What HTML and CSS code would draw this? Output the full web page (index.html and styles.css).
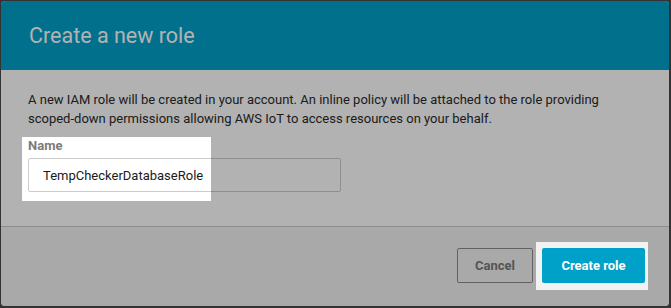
FILE: index.html
```html
<!DOCTYPE html>
<html lang="en">
<head>
  <meta charset="UTF-8">
  <meta name="viewport" content="width=device-width, initial-scale=1.0">
  <title>Create a new role</title>
  <link rel="stylesheet" href="styles.css">
</head>
<body>
  <div class="modal">
    <div class="modal-header">
      <h1>Create a new role</h1>
    </div>

    <div class="modal-body">
      <p>A new IAM role will be created in your account. An inline policy will be attached to the role providing scoped-down permissions allowing AWS IoT to access resources on your behalf.</p>
      <label for="role-name">Name</label>
      <input type="text" id="role-name" value="TempCheckerDatabaseRole" autocomplete="off" />
    </div>

    <div class="modal-footer">
      <button class="btn-cancel">Cancel</button>
      <button class="btn-primary">Create role</button>
    </div>
  </div>

  <!-- Dim overlay with two spotlight holes -->
  <svg class="spotlight" width="671" height="308" viewBox="0 0 671 308">
    <path fill-rule="evenodd" d="M0 0H671V308H0Z M22 137H211V201H22Z M536 242H648V290H536Z" />
  </svg>
</body>
</html>
```

FILE: styles.css
```css
:root {
  --aws-blue: #00a1c9;
  --text-color: #2a2a2a;
  --label-color: #7b7b7b;
  --border-color: #cccccc;
  --footer-bg: #f2f2f2;
}

* {
  margin: 0;
  padding: 0;
  box-sizing: border-box;
  font-family: Roboto, 'Liberation Sans', sans-serif;
}

body {
  background-color: #4a4a4a;
  width: 671px;
  height: 308px;
  overflow: hidden;
  padding: 1px 2px 2px 1px;
}

.modal {
  width: 668px;
  height: 305px;
  border-radius: 4px;
  overflow: hidden;
  display: flex;
  flex-direction: column;
  background-color: white;
}

.modal-header {
  height: 69px;
  background-color: var(--aws-blue);
  display: flex;
  align-items: center;
  padding-left: 28px;
}

.modal-header h1 {
  font-size: 21.5px;
  font-weight: 400;
  color: #ffffff;
}

.modal-body {
  flex: 1;
  padding: 20px 27px 0;
  color: var(--text-color);
}

.modal-body p {
  font-size: 13px;
  line-height: 19px;
  margin-bottom: 10px;
}

.modal-body label {
  display: block;
  font-size: 13px;
  font-weight: 700;
  line-height: 16px;
  color: var(--label-color);
  margin-bottom: 4px;
}

#role-name {
  width: 313px;
  height: 34px;
  padding: 0 14px;
  border: 1px solid var(--border-color);
  border-radius: 2px;
  font-size: 13px;
  color: #1a1a1a;
  outline: none;
}

.modal-footer {
  height: 80px;
  border-top: 1px solid var(--border-color);
  background-color: var(--footer-bg);
  display: flex;
  justify-content: flex-end;
  align-items: flex-start;
  gap: 9px;
  padding: 21px 24px 0 0;
}

button {
  height: 35px;
  border-radius: 2px;
  font-size: 13px;
  font-weight: 700;
  cursor: pointer;
}

.btn-cancel {
  width: 76px;
  background-color: transparent;
  border: 1px solid #8c8c8c;
  color: #7a7a7a;
}

.btn-primary {
  width: 103px;
  background-color: var(--aws-blue);
  border: none;
  color: white;
}

.spotlight {
  position: absolute;
  top: 0;
  left: 0;
  pointer-events: none;
}

.spotlight path {
  fill: rgba(0, 0, 0, 0.3);
}
```
